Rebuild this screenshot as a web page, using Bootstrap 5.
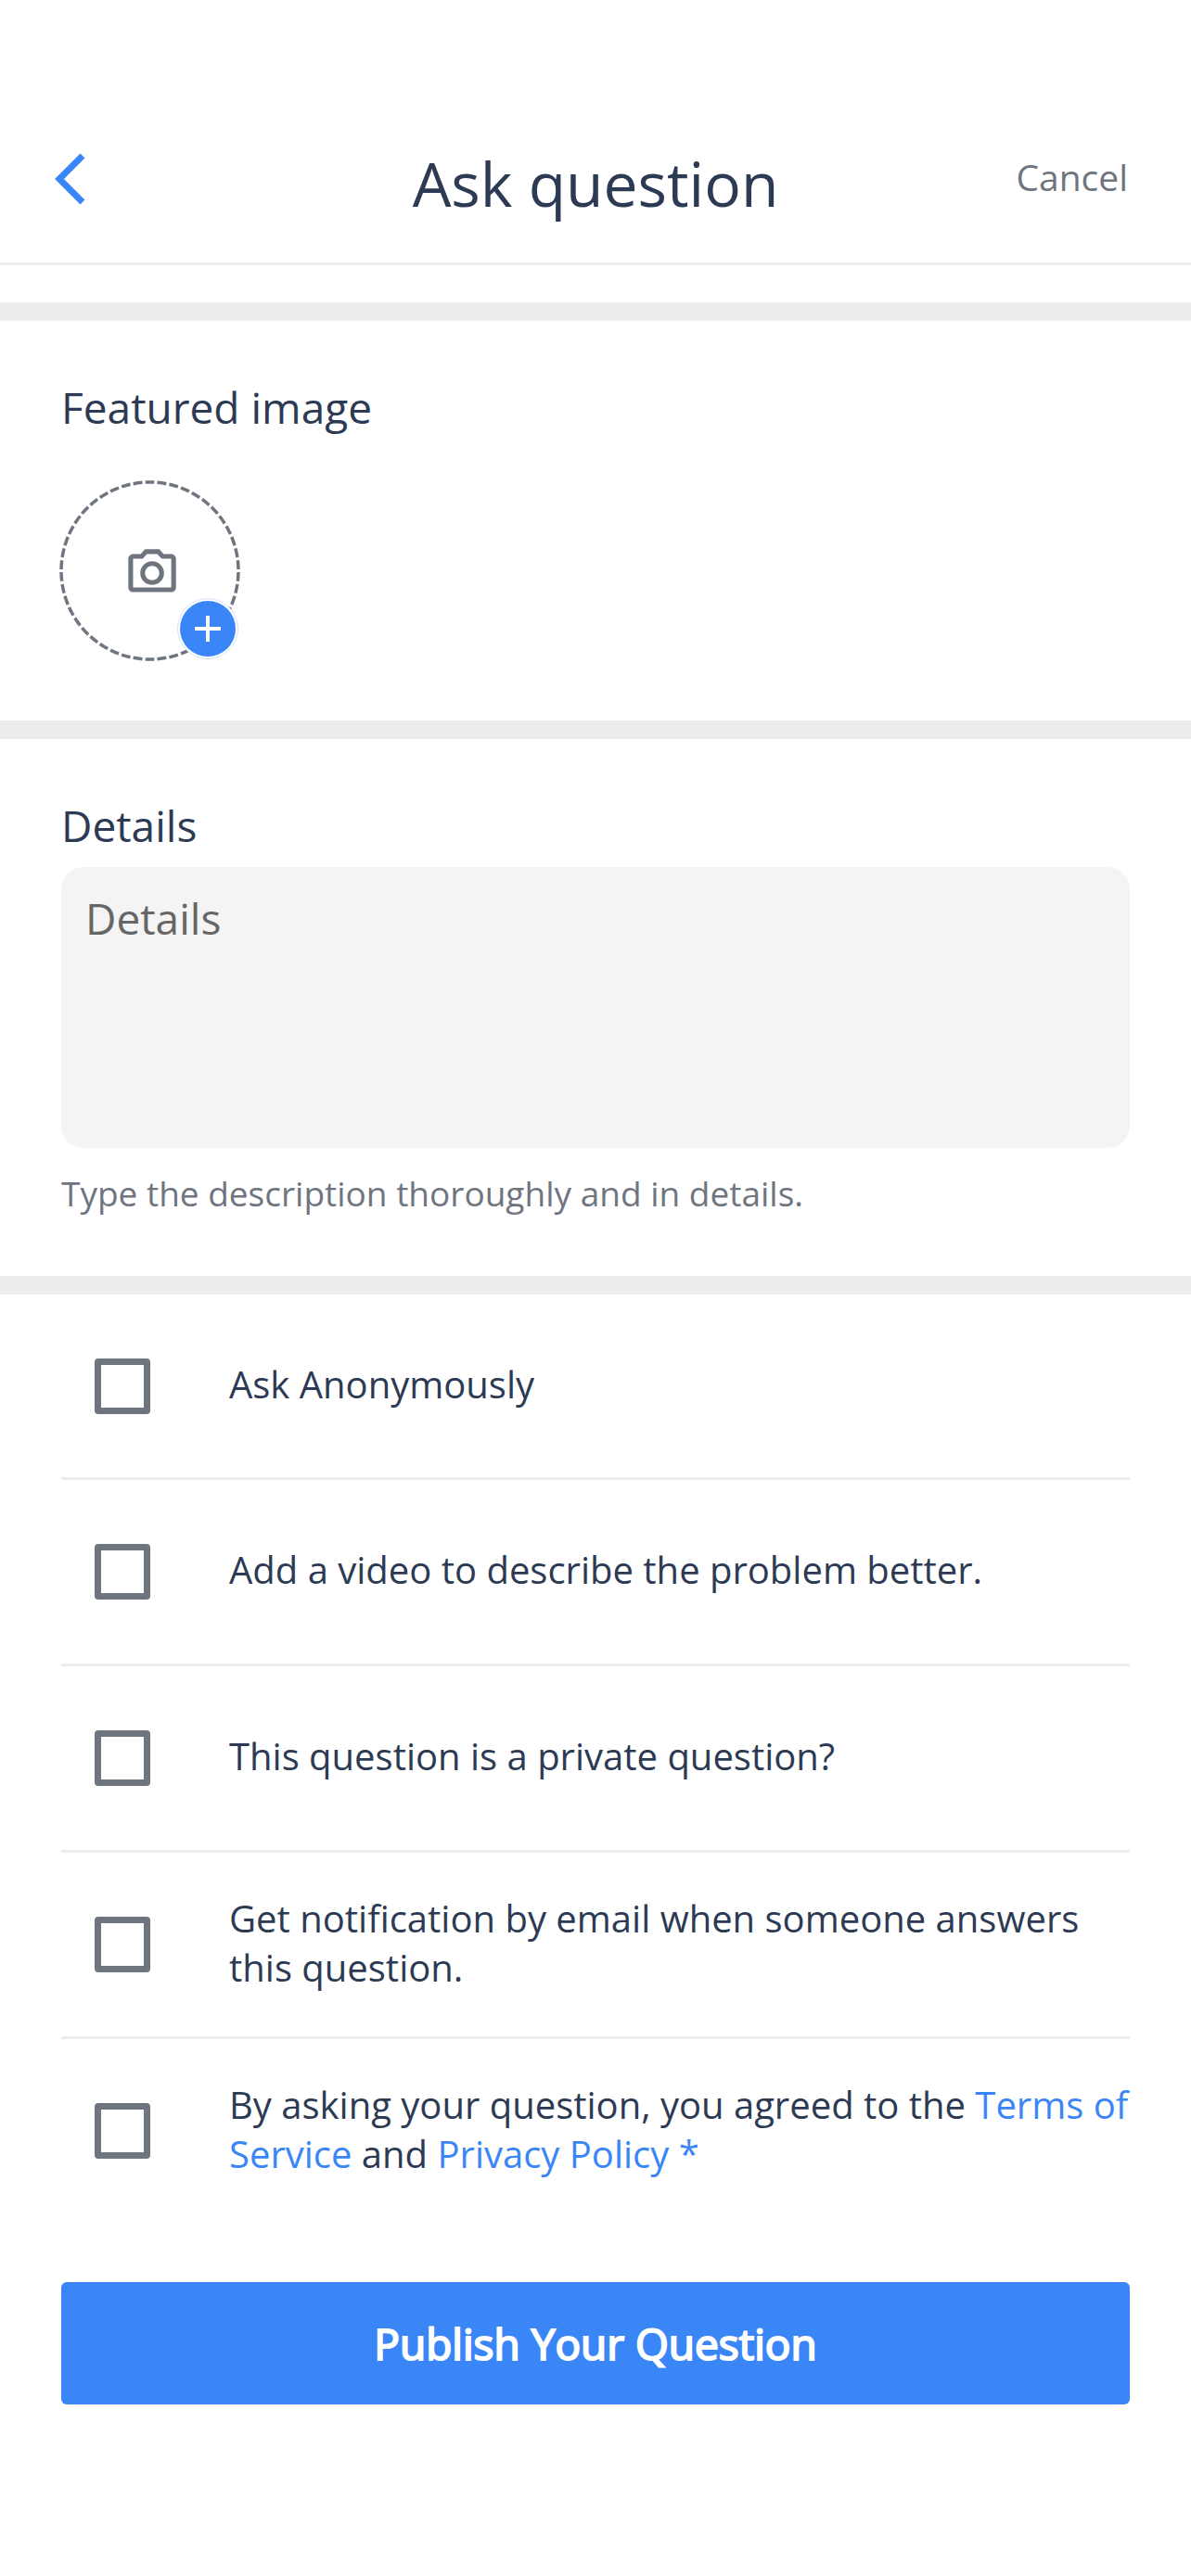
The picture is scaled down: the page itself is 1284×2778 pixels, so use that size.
<!DOCTYPE html>
<html lang="en">
<head>
<meta charset="utf-8">
<meta name="viewport" content="width=device-width, initial-scale=1">
<title>Ask question</title>
<link href="https://cdn.jsdelivr.net/npm/bootstrap@5.3.0/dist/css/bootstrap.min.css" rel="stylesheet">
<style>
  :root { --ink: #2d3a54; --muted: #6f757f; --brand: #3b86f7; --line: #ededed; }
  body { font-family: "Open Sans", "Noto Sans", sans-serif; color: var(--ink); background: #fff; }
  .topbar { display: grid; grid-template-columns: 1fr auto 1fr; padding: 144px 68px 41px; border-bottom: 3px solid var(--line); margin-bottom: 40px; }
  .topbar h1 { font-size: 66px; line-height: 90px; font-weight: 400; }
  .topbar .btn { --bs-btn-padding-x: 0; --bs-btn-padding-y: 0; --bs-btn-border-width: 0px; }
  .back-btn { margin-left: -10px; }
  .back-btn svg { width: 40px; height: 60px; }
  .cancel-btn { font-size: 39px; line-height: 54px; color: var(--muted); }
  .panel { border-top: 20px solid var(--line); padding: 62px 66px 64px; }
  .panel-label { font-size: 46px; line-height: 62px; }
  .photo-btn { --bs-btn-padding-x: 0; --bs-btn-padding-y: 0; --bs-btn-border-width: 0px; margin: 48px 0 0 -2px; }
  .details-box { height: 303px; margin-top: 14px; padding: 24px 26px; background: #f4f4f4; border-radius: 24px; font-size: 46px; line-height: 62px; color: var(--ink); resize: none; }
  .details-box::placeholder { color: #666; }
  .hint { font-size: 37px; line-height: 50px; color: var(--muted); }
  .options { padding-top: 0; padding-bottom: 61px; }
  .option { min-height: 201px; border-bottom: 3px solid var(--line); padding-left: 36px; gap: 85px; font-size: 40px; line-height: 53px; }
  .option:first-child { min-height: 200px; }
  .option:last-child { border-color: transparent; }
  .option label { padding-bottom: 5px; }
  .option .form-check-input { width: 60px; height: 60px; margin: 0; border: 7px solid var(--muted); border-radius: 4px; background-color: #fff; }
  .option .form-check-input:checked { background-color: var(--brand); border-color: var(--brand); }
  .option a { color: var(--brand); }
  .publish-row { padding: 0 66px 64px; }
  .publish-btn { height: 132px; border-radius: 6px; background: var(--brand); color: #fff; font-size: 46px; line-height: 62px; -webkit-text-stroke: 2px #fff; }
</style>
</head>
<body>
<header class="topbar align-items-center">
  <button type="button" class="btn back-btn text-start d-flex" aria-label="Back">
    <svg viewBox="0 0 40 60" fill="none" stroke="#3b86f7" stroke-width="7"><path d="M31 5 6 30l25 25"/></svg>
  </button>
  <h1 class="m-0 pt-2">Ask question</h1>
  <div class="text-end pb-1"><button type="button" class="btn cancel-btn">Cancel</button></div>
</header>
<form>
  <section class="panel">
    <div class="panel-label">Featured image</div>
    <button type="button" class="btn photo-btn d-block" aria-label="Add featured image">
      <svg class="d-block" width="195" height="195" viewBox="0 0 195 195" fill="none">
        <circle cx="97.500" cy="97.500" r="95.500" stroke="#6f757f" stroke-width="3.500" pathLength="46" stroke-dasharray=".75 .25" stroke-dashoffset=".875"/>
        <g transform="translate(69.200 66.600) scale(2.570)" fill="#6f757f"><path d="M20 5h-3.170L15 3H9L7.170 5H4c-1.100 0-2 .9-2 2v12c0 1.100.9 2 2 2h16c1.100 0 2-.9 2-2V7c0-1.100-.9-2-2-2zm0 14H4V7h4.050l1.830-2h4.240l1.830 2H20v12zM12 8c-2.760 0-5 2.240-5 5s2.240 5 5 5 5-2.240 5-5-2.240-5-5-5zm0 8c-1.650 0-3-1.350-3-3s1.350-3 3-3 3 1.350 3 3-1.350 3-3 3z"/></g>
        <circle cx="160" cy="160" r="32.500" fill="#fff" stroke="#d3e4fd"/>
        <circle cx="160" cy="160" r="30" fill="#3b86f7"/>
        <path d="M146 160h28M160 146v28" stroke="#fff" stroke-width="4"/>
      </svg>
    </button>
  </section>
  <section class="panel">
    <label class="panel-label d-block" for="details">Details</label>
    <textarea id="details" class="form-control border-0 shadow-none details-box" placeholder="Details" aria-describedby="details-hint"></textarea>
    <div id="details-hint" class="hint mt-4">Type the description thoroughly and in details.</div>
  </section>
  <section class="panel options">
    <div class="option d-flex align-items-center">
      <input class="form-check-input flex-shrink-0" type="checkbox" id="anon">
      <label for="anon">Ask Anonymously</label>
    </div>
    <div class="option d-flex align-items-center">
      <input class="form-check-input flex-shrink-0" type="checkbox" id="video">
      <label for="video">Add a video to describe the problem better.</label>
    </div>
    <div class="option d-flex align-items-center">
      <input class="form-check-input flex-shrink-0" type="checkbox" id="private">
      <label for="private">This question is a private question?</label>
    </div>
    <div class="option d-flex align-items-center">
      <input class="form-check-input flex-shrink-0" type="checkbox" id="notify">
      <label for="notify">Get notification by email when someone answers this question.</label>
    </div>
    <div class="option d-flex align-items-center">
      <input class="form-check-input flex-shrink-0" type="checkbox" id="terms" required>
      <label for="terms">By asking your question, you agreed to the <a class="text-decoration-none" href="#terms">Terms of Service</a> and <a class="text-decoration-none" href="#privacy">Privacy Policy *</a></label>
    </div>
  </section>
  <div class="publish-row">
    <button type="submit" class="btn border-0 w-100 p-0 publish-btn">Publish Your Question</button>
  </div>
</form>
<script src="https://cdn.jsdelivr.net/npm/bootstrap@5.3.0/dist/js/bootstrap.bundle.min.js"></script>
</body>
</html>
